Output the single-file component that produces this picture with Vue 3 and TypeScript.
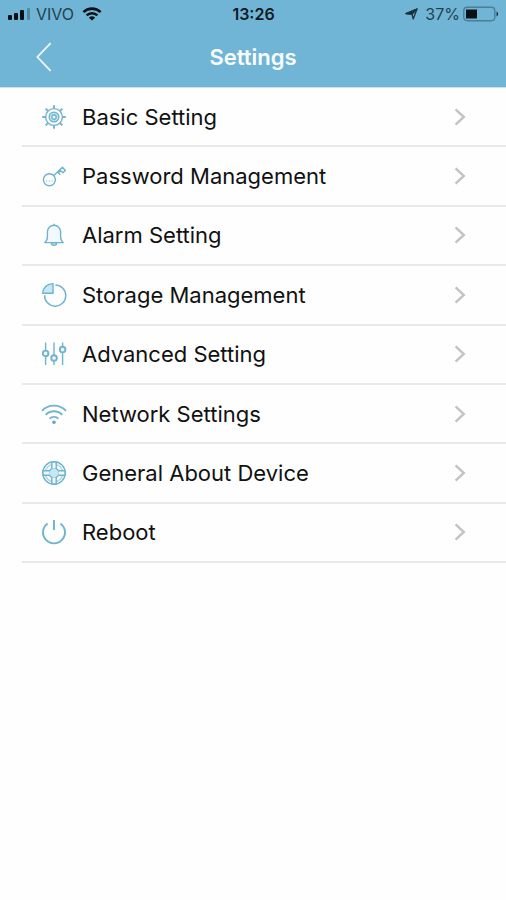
<script setup lang="ts">
type IconName = 'gear' | 'key' | 'bell' | 'pie' | 'sliders' | 'wifi' | 'wheel' | 'power'

interface SettingItem {
  icon: IconName
  label: string
}

const items: SettingItem[] = [
  { icon: 'gear', label: 'Basic Setting' },
  { icon: 'key', label: 'Password Management' },
  { icon: 'bell', label: 'Alarm Setting' },
  { icon: 'pie', label: 'Storage Management' },
  { icon: 'sliders', label: 'Advanced Setting' },
  { icon: 'wifi', label: 'Network Settings' },
  { icon: 'wheel', label: 'General About Device' },
  { icon: 'power', label: 'Reboot' },
]

const toothAngles: number[] = [0, 45, 90, 135, 180, 225, 270, 315]
const spokeAngles: number[] = [0, 90, 180, 270]
</script>

<template>
  <div class="screen">
    <header class="header">
      <div class="status">
        <div class="status-side">
          <svg class="signal" width="22" height="12" viewBox="0 0 22 12" aria-hidden="true">
            <rect x="0" y="7" width="4" height="5" rx="1" />
            <rect x="6" y="5" width="4" height="7" rx="1" />
            <rect x="12" y="2" width="4" height="10" rx="1" />
            <rect class="dim" x="19" y="0" width="3" height="12" rx="1" />
          </svg>
          <span class="carrier">VIVO</span>
          <svg class="status-wifi" width="20" height="14" viewBox="0 0 20 14" aria-hidden="true">
            <path d="M1.4 5.1a12.4 12.4 0 0 1 17.2 0M4.6 8.4a7.8 7.8 0 0 1 10.8 0" />
            <path class="dot" d="M10 13.6 6.9 10.7a4.5 4.5 0 0 1 6.2 0z" />
          </svg>
        </div>
        <time class="clock">13:26</time>
        <div class="status-side end">
          <svg class="location" width="13" height="12" viewBox="0 0 13 12" aria-hidden="true">
            <path d="M1 5.6 12 1 8.2 11 7 6.2z" />
            <path class="solid" d="M1 5.6 12 1 7 6.2z" />
          </svg>
          <span class="percent">37%</span>
          <svg class="battery" width="36" height="16" viewBox="0 0 36 16" aria-hidden="true">
            <rect class="case" x="0.8" y="1.3" width="31" height="13.4" rx="3.4" />
            <rect x="3" y="3.5" width="11" height="9" />
            <path d="M33.6 5.6c1.8.7 1.8 4.1 0 4.8z" />
          </svg>
        </div>
      </div>
      <nav class="bar">
        <button class="back" type="button" aria-label="Back">
          <svg width="16" height="30" viewBox="0 0 16 30" aria-hidden="true">
            <path d="M14.6 1.2 1.4 15l13.2 13.8" />
          </svg>
        </button>
        <h1 class="title">Settings</h1>
      </nav>
    </header>

    <main>
      <ul class="list">
        <li v-for="item in items" :key="item.icon" class="row">
          <button class="entry" type="button">
            <svg class="icon" width="26" height="26" viewBox="0 0 26 26" aria-hidden="true">
              <g v-if="item.icon === 'gear'">
                <circle cx="13" cy="13" r="8.4" />
                <circle class="tint" cx="13" cy="13" r="4.8" />
                <circle class="pale" cx="13" cy="13" r="2.2" />
                <path
                  v-for="angle in toothAngles"
                  :key="angle"
                  class="thick"
                  d="M13 1.2v3"
                  :transform="`rotate(${angle} 13 13)`"
                />
              </g>
              <g v-else-if="item.icon === 'key'">
                <circle cx="8.4" cy="16.8" r="6" />
                <path d="M12.8 12.6 21.4 4.2l3 3.2-2.6 2.4-2-2.2-2.4 2.2 1.8 2" />
                <path class="faint" d="M5 18h1.2M7.8 18H9M10.6 18h1.2" />
              </g>
              <g v-else-if="item.icon === 'bell'">
                <path class="pale" d="M3.8 20.6c2.2-1.6 2.6-3.6 2.6-6V9.8a6.6 6.6 0 0 1 13.2 0v4.8c0 2.4.4 4.4 2.600 6z" />
                <path class="tint" d="M10.4 20.8a2.600 2.600 0 0 0 5.2 0z" />
                <path d="M13 1.800v1.400" />
              </g>
              <g v-else-if="item.icon === 'pie'">
                <path d="M14.4 3a10.6 10.6 0 1 1-10.800 10.200" />
                <path class="tint" d="M12 11.200H1.600A10.200 10.200 0 0 1 12 1.600z" />
              </g>
              <g v-else-if="item.icon === 'sliders'">
                <path d="M4.600 1.600v8M4.600 15.400v8.600M13 1.600v12.600M13 20v4M21.600 1.600V6M21.600 11.600V24" />
                <circle class="thick pale" cx="4.600" cy="12.400" r="2.800" />
                <circle class="thick pale" cx="13" cy="17" r="2.800" />
                <circle class="thick pale" cx="21.600" cy="8.600" r="2.800" />
              </g>
              <g v-else-if="item.icon === 'wifi'" class="thick">
                <path d="M1 9.800a16.400 16.400 0 0 1 24 0M4.800 13.800a11.400 11.400 0 0 1 16.400 0M8.600 17.600a6.400 6.400 0 0 1 8.800 0" />
                <circle class="dot" cx="13" cy="21.200" r="1.800" />
              </g>
              <g v-else-if="item.icon === 'wheel'">
                <circle cx="13" cy="13" r="11.200" />
                <circle class="faint" cx="13" cy="13" r="8.800" />
                <circle class="tint" cx="13" cy="13" r="5" />
                <path
                  v-for="angle in spokeAngles"
                  :key="angle"
                  class="pale"
                  d="M10.800 8.400V2h4.400v6.400"
                  :transform="`rotate(${angle} 13 13)`"
                />
              </g>
              <g v-else class="thick">
                <path d="M6.600 4.400a11 11 0 1 0 12.800 0M13 1v10" />
              </g>
            </svg>
            <span class="label">{{ item.label }}</span>
            <svg class="chevron" width="12" height="18" viewBox="0 0 12 18" aria-hidden="true">
              <path d="M1.600 1.400 9.800 9l-8.200 7.600" />
            </svg>
          </button>
        </li>
      </ul>
    </main>
  </div>
</template>

<style>
body {
  background: #fefefe;
}
</style>

<style scoped>
.screen {
  min-height: 100vh;
  background: #fefefe;
  color: #111;
  font-family: Inter, "Liberation Sans", sans-serif;
}

.header {
  border-bottom: 1px solid #c9e1ec;
  background: #71b5d6;
}

.status {
  display: grid;
  grid-template-columns: 1fr auto 1fr;
  align-items: center;
  height: 28px;
  padding: 0 7px 0 8px;
  color: #14242d;
  font-size: 16px;
  line-height: 20px;
}

.status-side {
  display: flex;
  align-items: center;
  gap: 6px;
}

.status-side.end {
  justify-content: flex-end;
  gap: 3px;
}

.status svg {
  fill: #0a1116;
}

.signal .dim {
  fill: #4d8ba5;
}

.carrier {
  color: #24424f;
  margin-right: 2px;
}

.status-wifi path {
  fill: none;
  stroke: #0a1116;
  stroke-width: 2.6;
}

.status-wifi .dot {
  fill: #0a1116;
  stroke: none;
}

.clock {
  color: #0e1a20;
  font-weight: 600;
}

.location {
  margin-right: 4px;
}

.location path {
  fill: none;
  stroke: #1b333f;
  stroke-width: 1.3;
  stroke-linejoin: round;
}

.location .solid {
  fill: #1b333f;
}

.percent {
  color: #24424f;
}

.battery .case {
  fill: none;
  stroke: #4a7f98;
  stroke-width: 1.4;
}

.bar {
  display: grid;
  grid-template-columns: 1fr auto 1fr;
  align-items: center;
  padding-bottom: 1px;
  height: 58px;
}

.back {
  display: flex;
  justify-self: start;
  margin-left: 28px;
  padding: 8px;
  border: 0;
  background: none;
  cursor: pointer;
}

.back path {
  fill: none;
  stroke: #eef8fc;
  stroke-width: 1.8;
}

.title {
  margin: 0;
  color: #fafdff;
  font-size: 22px;
  font-weight: 600;
  line-height: 28px;
}

.list {
  display: grid;
  grid-auto-rows: 1fr;
  min-height: 475px;
  margin: 0;
  padding: 0 0 0 22px;
  list-style: none;
}

.row {
  display: flex;
  border-bottom: 2px solid #e9e9e9;
}

.entry {
  display: flex;
  flex: 1;
  align-items: center;
  gap: 15px;
  padding: 0 40px 0 19px;
  border: 0;
  background: none;
  color: inherit;
  font: inherit;
  font-size: 22px;
  line-height: 28px;
  text-align: left;
  cursor: pointer;
}

.label {
  flex: 1;
}

.icon {
  fill: none;
  stroke: #6fb3cd;
  stroke-width: 1.4;
  stroke-linejoin: round;
}

.icon .tint {
  fill: #c6e8f6;
}

.icon .pale {
  fill: #f0f9fd;
}

.icon .thick {
  stroke-width: 1.9;
}

.icon .faint {
  stroke: #a9d4e4;
}

.icon .dot {
  fill: #58acd0;
  stroke: none;
}

.chevron path {
  fill: none;
  stroke: #c3c3c3;
  stroke-width: 2.4;
}
</style>
